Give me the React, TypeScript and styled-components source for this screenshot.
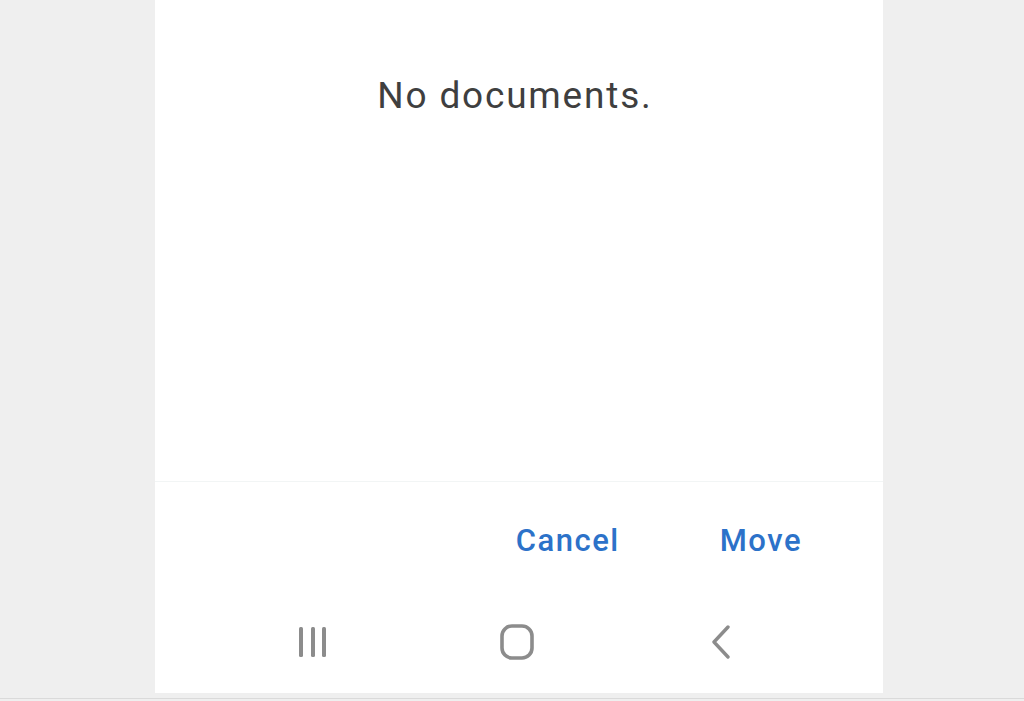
import styled, { createGlobalStyle } from "styled-components";

const GlobalStyle = createGlobalStyle`
  html, body {
    margin: 0;
    padding: 0;
    background: #efefef;
    font-family: Roboto, "Noto Sans", "Liberation Sans", sans-serif;
  }
`;

const Page = styled.div`
  width: 1024px;
  height: 701px;
  overflow: hidden;
  display: flex;
  flex-direction: column;
`;

const Sheet = styled.div`
  margin-left: 155px;
  width: 728px;
  height: 693px;
  background: #ffffff;
  display: flex;
  flex-direction: column;
`;

const Body = styled.div`
  flex: 0 0 482px;
  box-sizing: border-box;
  padding-top: 74px;
  border-bottom: 1px solid #f2f5f5;
  text-align: center;
`;

const Empty = styled.p`
  margin: 0;
  padding-right: 8px;
  font-size: 37px;
  line-height: 44px;
  letter-spacing: 1.8px;
  color: #3f3f3f;
`;

const Actions = styled.div`
  flex: 0 0 116px;
  display: flex;
  align-items: center;
  justify-content: flex-end;
  gap: 100px;
  padding-right: 81px;
`;

const TextButton = styled.button`
  border: 0;
  background: none;
  padding: 0;
  font-family: inherit;
  font-size: 31px;
  font-weight: 500;
  letter-spacing: 1.5px;
  color: #2c72c9;
  cursor: pointer;
`;

const NavBar = styled.div`
  flex: 1;
  display: grid;
  grid-template-columns: repeat(3, 204px);
  align-items: center;
  justify-items: center;
  padding: 0 60px 8px 56px;
`;

const NavIcon = styled.svg`
  display: block;
  color: #8c8c8c;
`;

const Rule = styled.div`
  margin-top: 5px;
  height: 1px;
  background: #dadada;
`;

function RecentsIcon() {
  return (
    <NavIcon width="32" height="32" viewBox="0 0 32 32">
      <rect x="2" y="1" width="4" height="30" rx="1.5" fill="currentColor" />
      <rect x="14" y="1" width="4" height="30" rx="1.5" fill="currentColor" />
      <rect x="25" y="1" width="4" height="30" rx="1.5" fill="currentColor" />
    </NavIcon>
  );
}

function HomeIcon() {
  return (
    <NavIcon width="34" height="36" viewBox="0 0 34 36">
      <rect
        x="2"
        y="2"
        width="30"
        height="32"
        rx="10"
        fill="none"
        stroke="currentColor"
        strokeWidth="3.6"
      />
    </NavIcon>
  );
}

function BackIcon() {
  return (
    <NavIcon width="22" height="34" viewBox="0 0 22 34">
      <path
        d="M18 2 L4 17 L18 32"
        fill="none"
        stroke="currentColor"
        strokeWidth="3.4"
        strokeLinecap="round"
        strokeLinejoin="round"
      />
    </NavIcon>
  );
}

export default function App() {
  return (
    <>
      <GlobalStyle />
      <Page>
        <Sheet>
          <Body>
            <Empty>No documents.</Empty>
          </Body>
          <Actions>
            <TextButton>Cancel</TextButton>
            <TextButton>Move</TextButton>
          </Actions>
          <NavBar>
            <RecentsIcon />
            <HomeIcon />
            <BackIcon />
          </NavBar>
        </Sheet>
        <Rule />
      </Page>
    </>
  );
}
